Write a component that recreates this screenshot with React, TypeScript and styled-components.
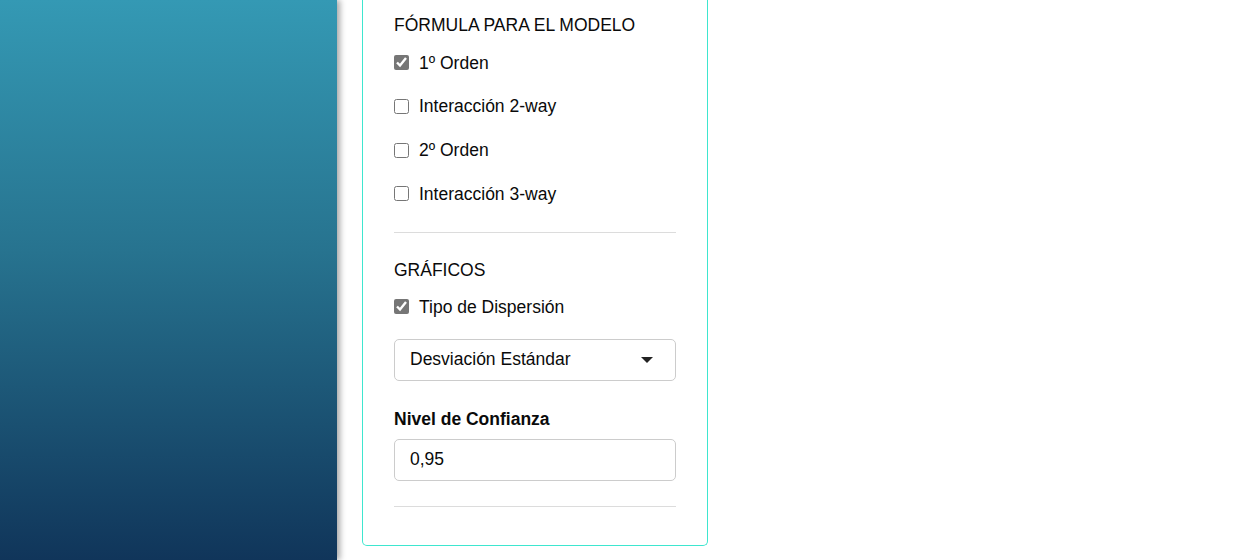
import React from 'react';
import styled, {createGlobalStyle} from 'styled-components';

const GlobalStyle = createGlobalStyle`
    html, body {
        margin: 0;
        padding: 0;
        height: 100%;
        overflow: hidden;
        background: #fff;
    }
    body {
        font-family: "Liberation Sans", Arial, sans-serif;
        color: #0a0a0a;
    }
`

const formulaItems = [
    {label: '1º Orden', checked: true},
    {label: 'Interacción 2-way', checked: false},
    {label: '2º Orden', checked: false},
    {label: 'Interacción 3-way', checked: false},
]

const App: React.FC = () => {
    return (
        <>
            <GlobalStyle/>
            <Layout>
                <Sidebar/>
                <Main>
                    <Panel>
                        <SectionTitle $bottom={6}>FÓRMULA PARA EL MODELO</SectionTitle>
                        <CheckList>
                            {formulaItems.map((item) => (
                                <CheckRow key={item.label} $height={43.67}>
                                    <Check type="checkbox" defaultChecked={item.checked}/>
                                    <span>{item.label}</span>
                                </CheckRow>
                            ))}
                        </CheckList>
                        <Divider $top={16}/>

                        <SectionTitle $top={27} $bottom={5}>GRÁFICOS</SectionTitle>
                        <CheckRow $height={44}>
                            <Check type="checkbox" defaultChecked/>
                            <span>Tipo de Dispersión</span>
                        </CheckRow>
                        <SelectBox>
                            <span>Desviación Estándar</span>
                            <svg width="12" height="6" viewBox="0 0 12 6">
                                <path d="M0 0 L12 0 L6 6 Z" fill="#222"/>
                            </svg>
                        </SelectBox>

                        <FieldLabel>Nivel de Confianza</FieldLabel>
                        <TextInput defaultValue="0,95"/>
                        <Divider $top={25}/>
                    </Panel>
                </Main>
            </Layout>
        </>
    );
}

export default App;

const Layout = styled.div`
    display: flex;
    height: 100vh;
`

const Sidebar = styled.aside`
    width: 337px;
    flex-shrink: 0;
    background: linear-gradient(to bottom, #3499b4 0%, #27738f 45%, #10355a 100%);
    box-shadow: 3px 0 6px rgba(0, 0, 0, 0.35);
    position: relative;
    z-index: 1;
`

const Main = styled.main`
    flex: 1;
    padding-left: 25px;
`

const Panel = styled.section`
    width: 282px;
    padding: 15px 31px 38px 31px;
    border: 1px solid #3ee6cf;
    border-top: none;
    border-radius: 0 0 5px 5px;
    display: flex;
    flex-direction: column;
    font-size: 17.5px;
`

const SectionTitle = styled.div<{$top?: number; $bottom: number}>`
    line-height: 20px;
    margin-top: ${p => p.$top ?? 0}px;
    margin-bottom: ${p => p.$bottom}px;
`

const CheckList = styled.div`
    display: flex;
    flex-direction: column;
`

const CheckRow = styled.label<{$height: number}>`
    display: flex;
    align-items: center;
    gap: 10px;
    height: ${p => p.$height}px;
    flex-shrink: 0;
    line-height: 20px;
`

const Check = styled.input`
    width: 15px;
    height: 15px;
    margin: 0;
    accent-color: #767676;
`

const Divider = styled.hr<{$top: number}>`
    width: 100%;
    border: none;
    border-top: 1px solid #dcdcdc;
    margin: ${p => p.$top}px 0 0 0;
`

const SelectBox = styled.div`
    margin-top: 10px;
    height: 40px;
    border: 1px solid #cccccc;
    border-radius: 5px;
    display: flex;
    align-items: center;
    justify-content: space-between;
    padding: 0 22px 0 15px;
`

const FieldLabel = styled.div`
    margin-top: 28px;
    line-height: 20px;
    font-weight: bold;
`

const TextInput = styled.input`
    margin-top: 10px;
    height: 42px;
    box-sizing: border-box;
    width: 100%;
    border: 1px solid #cccccc;
    border-radius: 5px;
    padding: 0 15px;
    font-family: inherit;
    font-size: 17.5px;
    color: #0a0a0a;
    outline: none;
`
